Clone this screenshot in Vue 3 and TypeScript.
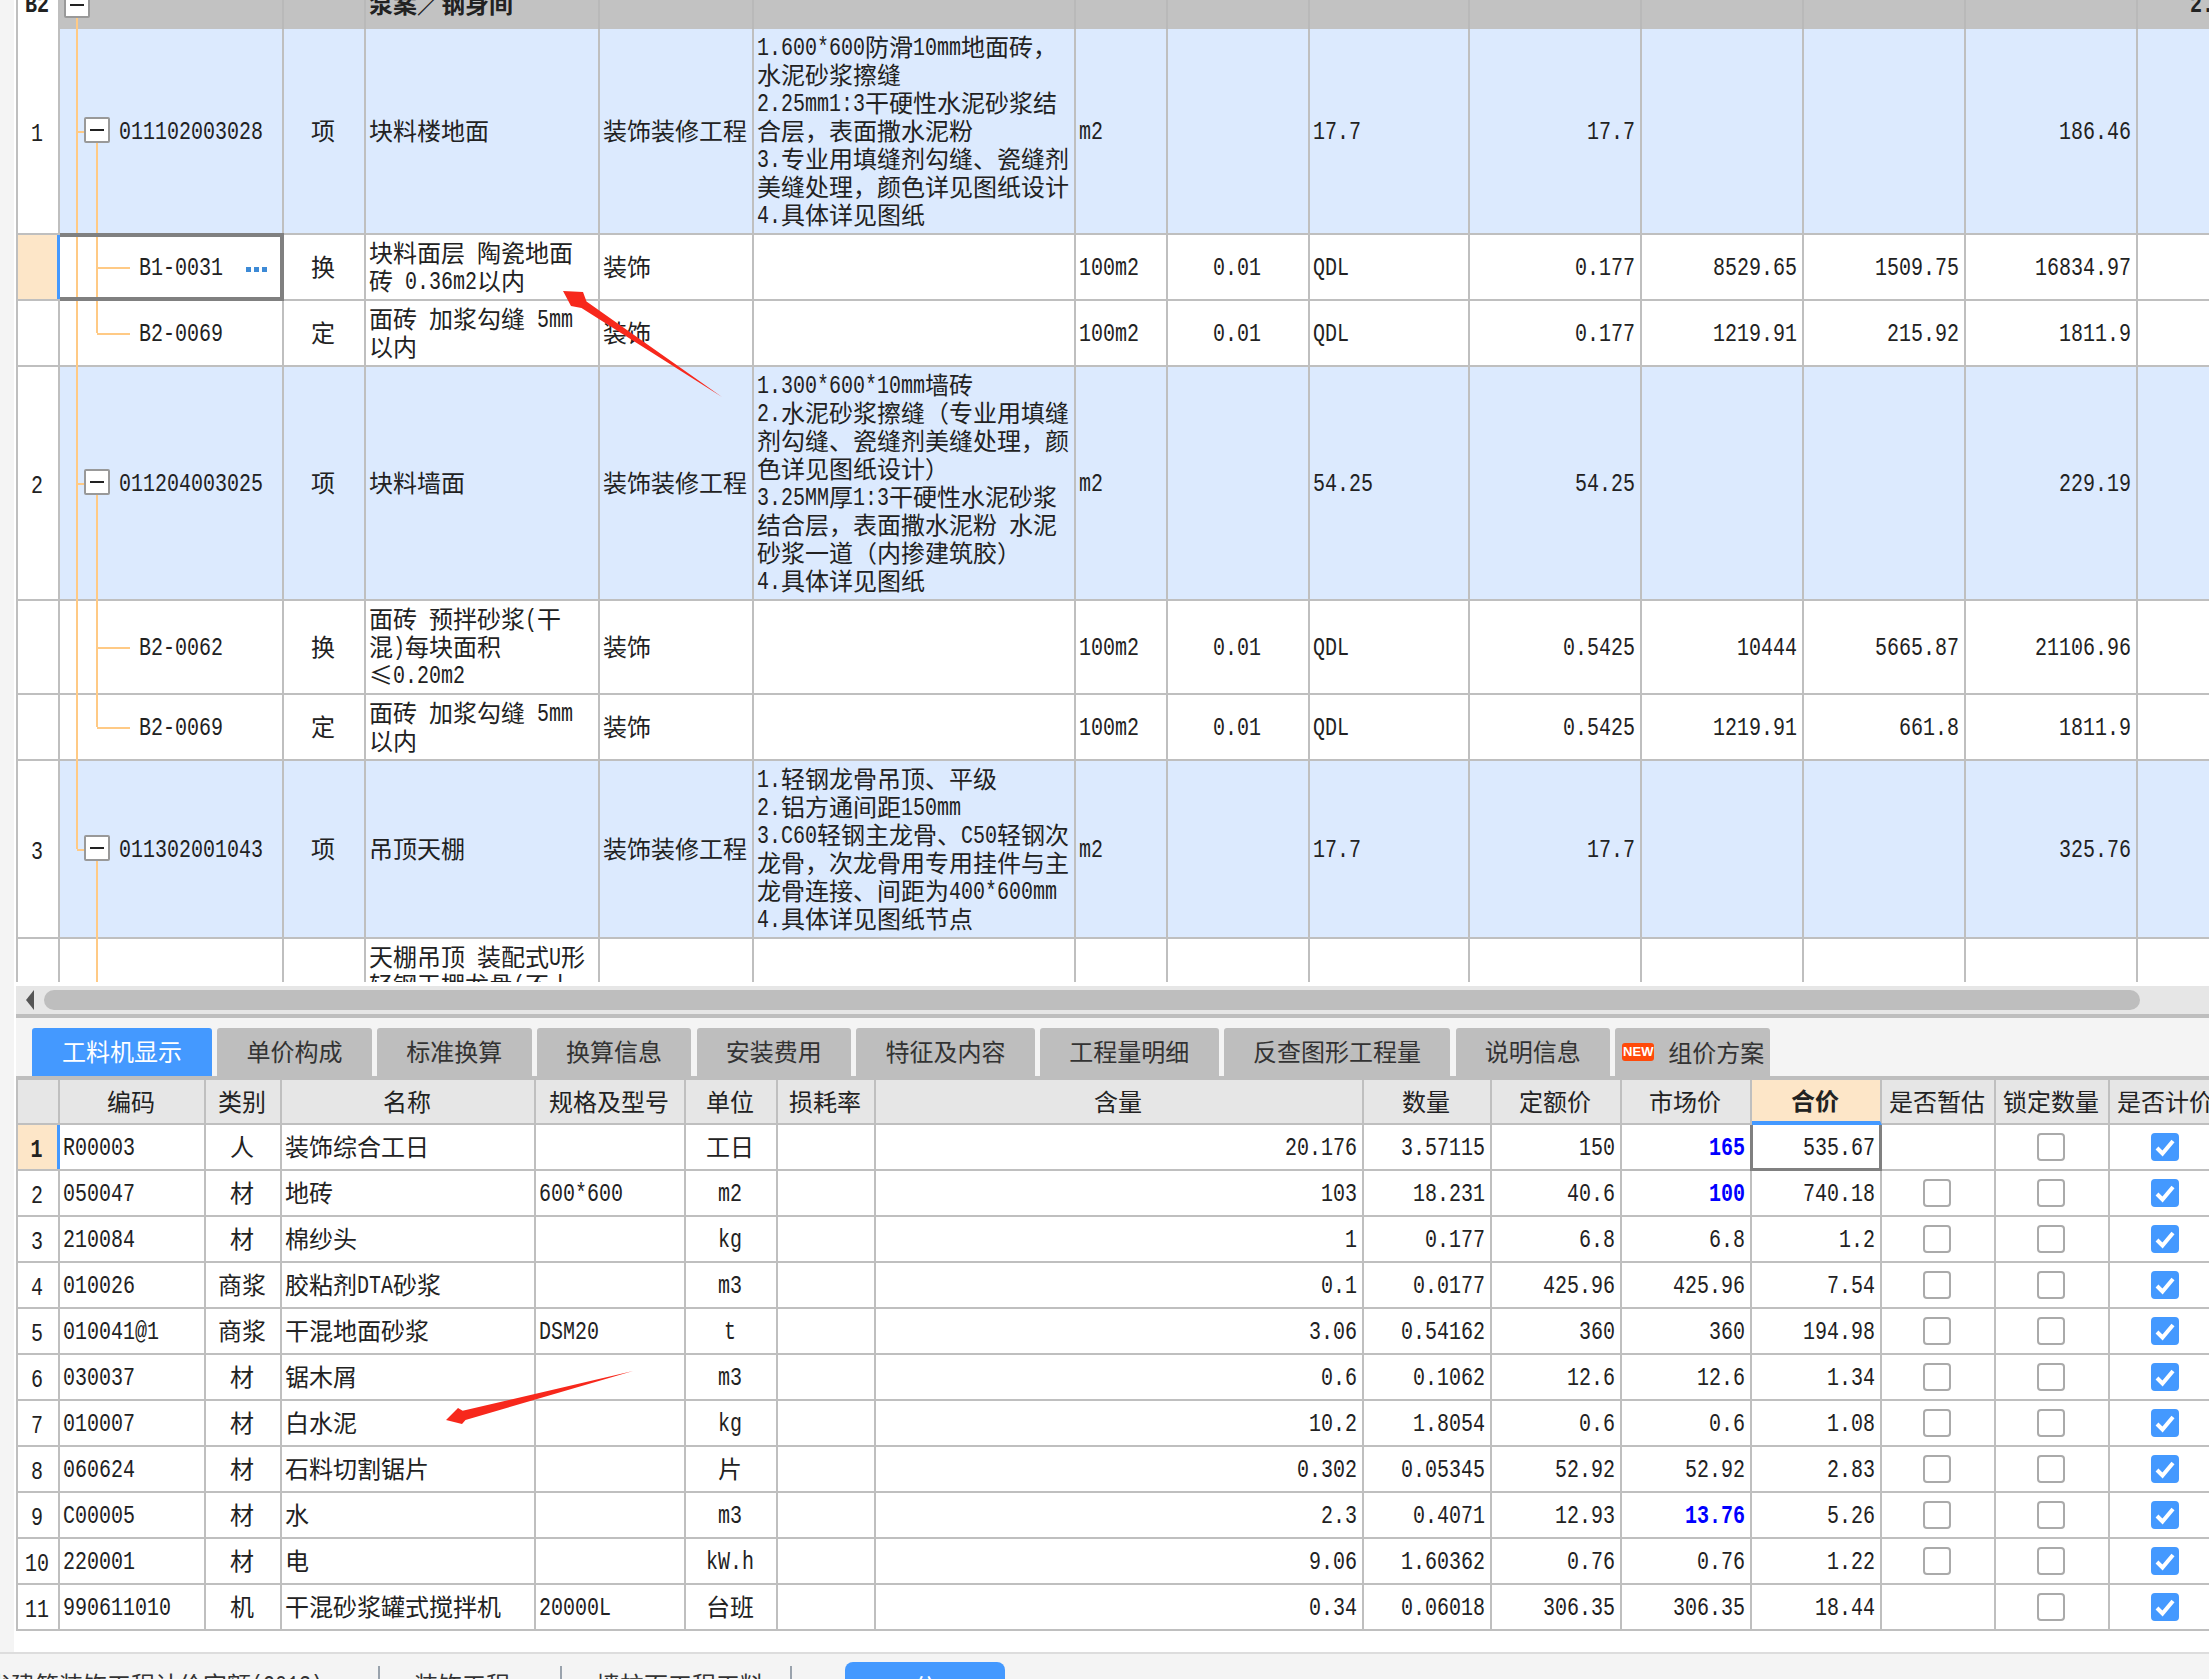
<script setup lang="ts">
import { h, type FunctionalComponent } from "vue";

// latin runs get their own narrow font so digits sit at half the width of a CJK glyph
const Tx: FunctionalComponent<{ t: string }> = ({ t }) =>
  (t.match(/[\x00-\x7f]+|[^\x00-\x7f]+/g) ?? []).map((s) =>
    s.charCodeAt(0) < 128 ? h("span", { class: "lat" }, s) : h("span", s)
  );
Tx.props = ["t"];

interface TopRow {
  idx: string;
  code: string;
  level: 1 | 2;
  flags?: string;
  cells: string[];
}

const topAlign = ["c", "l", "l", "l", "l", "c", "l", "r", "r", "r", "r", "l"];

const topRows: TopRow[] = [
  {
    idx: "1",
    code: "011102003028",
    level: 1,
    cells: [
      "项",
      "块料楼地面",
      "装饰装修工程",
      "1.600*600防滑10mm地面砖，\n水泥砂浆擦缝\n2.25mm1:3干硬性水泥砂浆结\n合层，表面撒水泥粉\n3.专业用填缝剂勾缝、瓷缝剂\n美缝处理，颜色详见图纸设计\n4.具体详见图纸",
      "m2",
      "",
      "17.7",
      "17.7",
      "",
      "",
      "186.46",
      "",
    ],
  },
  {
    idx: "",
    code: "B1-0031",
    level: 2,
    flags: "sel",
    cells: ["换", "块料面层 陶瓷地面\n砖 0.36m2以内", "装饰", "", "100m2", "0.01", "QDL", "0.177", "8529.65", "1509.75", "16834.97", ""],
  },
  {
    idx: "",
    code: "B2-0069",
    level: 2,
    flags: "last",
    cells: ["定", "面砖 加浆勾缝 5mm\n以内", "装饰", "", "100m2", "0.01", "QDL", "0.177", "1219.91", "215.92", "1811.9", ""],
  },
  {
    idx: "2",
    code: "011204003025",
    level: 1,
    cells: [
      "项",
      "块料墙面",
      "装饰装修工程",
      "1.300*600*10mm墙砖\n2.水泥砂浆擦缝（专业用填缝\n剂勾缝、瓷缝剂美缝处理，颜\n色详见图纸设计）\n3.25MM厚1:3干硬性水泥砂浆\n结合层，表面撒水泥粉 水泥\n砂浆一道（内掺建筑胶）\n4.具体详见图纸",
      "m2",
      "",
      "54.25",
      "54.25",
      "",
      "",
      "229.19",
      "",
    ],
  },
  {
    idx: "",
    code: "B2-0062",
    level: 2,
    cells: ["换", "面砖 预拌砂浆(干\n混)每块面积\n≤0.20m2", "装饰", "", "100m2", "0.01", "QDL", "0.5425", "10444", "5665.87", "21106.96", ""],
  },
  {
    idx: "",
    code: "B2-0069",
    level: 2,
    flags: "last",
    cells: ["定", "面砖 加浆勾缝 5mm\n以内", "装饰", "", "100m2", "0.01", "QDL", "0.5425", "1219.91", "661.8", "1811.9", ""],
  },
  {
    idx: "3",
    code: "011302001043",
    level: 1,
    flags: "end",
    cells: [
      "项",
      "吊顶天棚",
      "装饰装修工程",
      "1.轻钢龙骨吊顶、平级\n2.铝方通间距150mm\n3.C60轻钢主龙骨、C50轻钢次\n龙骨，次龙骨用专用挂件与主\n龙骨连接、间距为400*600mm\n4.具体详见图纸节点",
      "m2",
      "",
      "17.7",
      "17.7",
      "",
      "",
      "325.76",
      "",
    ],
  },
  {
    idx: "",
    code: "",
    level: 2,
    flags: "tail",
    cells: ["", "天棚吊顶 装配式U形\n轻钢天棚龙骨(不上\n人型)", "", "", "", "", "", "", "", "", "", ""],
  },
];

const tabs = ["工料机显示", "单价构成", "标准换算", "换算信息", "安装费用", "特征及内容", "工程量明细", "反查图形工程量", "说明信息"];

const heads = ["", "编码", "类别", "名称", "规格及型号", "单位", "损耗率", "含量", "数量", "定额价", "市场价", "合价", "是否暂估", "锁定数量", "是否计价"];
const botAlign = ["l", "c", "l", "l", "c", "l", "r", "r", "r", "r", "r"];

// code, type, name, spec, unit, loss, amount, qty, base price, market price, total
const items: { c: string[]; blue?: boolean; est: boolean }[] = [
  { c: ["R00003", "人", "装饰综合工日", "", "工日", "", "20.176", "3.57115", "150", "165", "535.67"], blue: true, est: false },
  { c: ["050047", "材", "地砖", "600*600", "m2", "", "103", "18.231", "40.6", "100", "740.18"], blue: true, est: true },
  { c: ["210084", "材", "棉纱头", "", "kg", "", "1", "0.177", "6.8", "6.8", "1.2"], est: true },
  { c: ["010026", "商浆", "胶粘剂DTA砂浆", "", "m3", "", "0.1", "0.0177", "425.96", "425.96", "7.54"], est: true },
  { c: ["010041@1", "商浆", "干混地面砂浆", "DSM20", "t", "", "3.06", "0.54162", "360", "360", "194.98"], est: true },
  { c: ["030037", "材", "锯木屑", "", "m3", "", "0.6", "0.1062", "12.6", "12.6", "1.34"], est: true },
  { c: ["010007", "材", "白水泥", "", "kg", "", "10.2", "1.8054", "0.6", "0.6", "1.08"], est: true },
  { c: ["060624", "材", "石料切割锯片", "", "片", "", "0.302", "0.05345", "52.92", "52.92", "2.83"], est: true },
  { c: ["C00005", "材", "水", "", "m3", "", "2.3", "0.4071", "12.93", "13.76", "5.26"], blue: true, est: true },
  { c: ["220001", "材", "电", "", "kW.h", "", "9.06", "1.60362", "0.76", "0.76", "1.22"], est: true },
  { c: ["990611010", "机", "干混砂浆罐式搅拌机", "20000L", "台班", "", "0.34", "0.06018", "306.35", "306.35", "18.44"], est: false },
];
</script>

<template>
  <div class="page">
    <div class="body">
      <div class="top">
        <div class="row t-cols band">
          <div class="cell c idx"><b class="line"><Tx t="B2" /></b></div>
          <div class="cell tree lv0"><i class="box band-box"></i></div>
          <div class="cell"></div>
          <div class="cell l"><b class="line">泵案／钢身间</b></div>
          <div class="cell" v-for="n in 9" :key="n"></div>
          <div class="cell band-end"><b class="line"><Tx t="2." /></b></div>
        </div>

        <div class="row t-cols" v-for="(r, i) in topRows" :key="i" :class="r.level === 1 ? 'parent' : 'child'">
          <div class="cell c idx" :class="{ cur: r.flags === 'sel' }">
            <div class="line"><Tx :t="r.idx" /></div>
          </div>
          <div class="cell tree" :class="[r.level === 1 ? 'lv1' : 'lv2', r.flags]">
            <template v-if="r.level === 1">
              <i class="stub"></i>
              <i class="box"></i>
            </template>
            <i v-else-if="r.code" class="hz"></i>
            <div class="line code"><Tx :t="r.code" /></div>
            <template v-if="r.flags === 'sel'">
              <i class="frame"></i>
              <svg class="more" width="22" height="5" viewBox="0 0 22 5">
                <rect x="0" y="0" width="5" height="5" fill="#3d8ad6" />
                <rect x="8" y="0" width="5" height="5" fill="#3d8ad6" />
                <rect x="16" y="0" width="5" height="5" fill="#3d8ad6" />
              </svg>
            </template>
          </div>
          <div class="cell" v-for="(v, j) in r.cells" :key="j" :class="topAlign[j]">
            <div class="line" v-for="(ln, k) in v.split('\n')" :key="k"><Tx :t="ln" /></div>
          </div>
        </div>
      </div>

      <div class="scroll">
        <svg class="arrow" width="8" height="20" viewBox="0 0 8 20"><path d="M8 0 L0 10 L8 20 Z" fill="#555" /></svg>
        <div class="thumb"></div>
      </div>

      <div class="tabs">
        <div class="tab" v-for="(t, i) in tabs" :key="t" :class="{ on: i === 0 }">{{ t }}</div>
        <div class="tab last-tab"><span class="new">NEW</span>组价方案</div>
      </div>

      <div class="bottom">
        <div class="row b-cols head">
          <div class="cell c" v-for="(t, i) in heads" :key="i" :class="{ hot: t === '合价' }">{{ t }}</div>
        </div>
        <div class="row b-cols item" v-for="(it, i) in items" :key="i">
          <div class="cell c idx" :class="{ cur: i === 0 }">
            <div class="line">
              <b v-if="i === 0"><Tx t="1" /></b>
              <Tx v-else :t="String(i + 1)" />
            </div>
          </div>
          <div class="cell" v-for="(v, j) in it.c" :key="j" :class="[botAlign[j], { strong: it.blue && j === 9, picked: i === 0 && j === 10 }]">
            <div class="line"><Tx :t="v" /></div>
          </div>
          <div class="cell c"><span v-if="it.est" class="chk"></span></div>
          <div class="cell c"><span class="chk"></span></div>
          <div class="cell c">
            <span class="chk on">
              <svg width="24" height="24" viewBox="0 0 24 24"><path d="M4 13 L9.5 18.5 L20 6" fill="none" stroke="#fff" stroke-width="4" /></svg>
            </span>
          </div>
        </div>
      </div>
    </div>

    <div class="footer">
      <div class="f-item first">省建筑装饰工程计价定额<Tx t="(2013)" /></div>
      <div class="f-item second">装饰工程</div>
      <div class="f-item third">墙柱面工程工料</div>
      <div class="f-btn">分</div>
    </div>

    <svg class="marks" width="2209" height="1679" viewBox="0 0 2209 1679">
      <polygon points="563,291 583,292 586.5,301.5 722,397 581.5,308 571,306" fill="#f7281c" />
      <polygon points="446,1420 458,1408 462.7,1410.8 633,1371 465.5,1420 462,1424" fill="#f7281c" />
    </svg>
  </div>
</template>

<style scoped>
.page {
  position: relative;
  width: 2209px;
  height: 1679px;
  overflow: hidden;
  display: flex;
  flex-direction: column;
  background: #fff;
  color: #222;
  font-family: "Noto Sans CJK SC", sans-serif;
  font-size: 24px;
  line-height: 28px;
}

.body {
  height: 1652px;
  flex: none;
  border-left: 14px solid #f4f4f4;
  padding-left: 2px;
  box-sizing: border-box;
}

.page :deep(.lat) {
  display: inline-block;
  font-family: "Liberation Mono", monospace;
  font-size: 20px;
  line-height: 28px;
  white-space: pre;
  transform: translateY(-1px) scaleY(1.28);
  transform-origin: 50% 69%;
}

.top {
  height: 982px;
  margin-bottom: 4px;
  overflow: hidden;
}

.row {
  display: grid;
  width: max-content;
  box-sizing: border-box;
  border-left: 2px solid #bfbfbf;
  border-bottom: 2px solid #bfbfbf;
}

.t-cols {
  grid-template-columns: 42px 224px 82px 234px 154px 322px 92px 142px 160px 172px 162px 162px 172px 100px;
}

.b-cols {
  grid-template-columns: 42px 146px 76px 254px 150px 92px 98px 488px 128px 130px 130px 130px 114px 114px 114px;
}

.cell {
  position: relative;
  box-sizing: border-box;
  border-right: 2px solid #bfbfbf;
  padding: 3px 2px 5px 3px;
  display: flex;
  flex-direction: column;
  justify-content: center;
  white-space: nowrap;
}

.cell.c {
  align-items: center;
  padding-left: 1px;
  padding-right: 3px;
}

.cell.l {
  align-items: flex-start;
}

.cell.r {
  align-items: flex-end;
  padding-right: 5px;
}

.line {
  display: block;
  height: 28px;
}

.idx .line {
  margin-top: 4px;
}

.band {
  height: 45px;
  margin-top: -16px;
  border-bottom: none;
}

.band .cell {
  background: #c2c2c2;
  border-right-color: #b9b9b9;
  padding-bottom: 11px;
}

.band .idx {
  background: #fff;
  border-right-color: #bfbfbf;
}

.band .idx .line {
  margin-top: 0;
}

.band-end {
  padding-left: 52px;
}

.parent .cell {
  background: #dceafe;
}

.parent .idx {
  background: #fff;
}

.idx.cur {
  background: #fde6c8;
  border-right: 3px solid #4499ff;
}

/* tree connectors */
.tree {
  padding-left: 59px;
}

.tree::before {
  content: "";
  position: absolute;
  left: 16px;
  top: 0;
  bottom: -2px;
  width: 2px;
  background: #ffca85;
}

.tree::after {
  content: "";
  position: absolute;
  left: 36px;
  top: 0;
  bottom: -2px;
  width: 2px;
  background: #ffca85;
}

.lv0::after {
  display: none;
}

.lv0::before {
  top: 50%;
}

.lv1::after {
  top: 50%;
}

.end::before {
  bottom: 50%;
}

.tail::before {
  display: none;
}

.last::after {
  bottom: 50%;
}

.lv2 {
  padding-left: 79px;
}

.stub {
  position: absolute;
  left: 17px;
  top: 50%;
  width: 8px;
  height: 2px;
  background: #ffca85;
}

.hz {
  position: absolute;
  left: 37px;
  top: 50%;
  width: 33px;
  height: 2px;
  background: #ffca85;
}

.box {
  position: absolute;
  z-index: 1;
  left: 24px;
  top: 50%;
  width: 26px;
  height: 26px;
  margin-top: -14px;
  box-sizing: border-box;
  background: #fff;
  border: 2px solid #999;
  border-radius: 2px;
}

.box::before {
  content: "";
  position: absolute;
  left: 4px;
  right: 4px;
  top: 10px;
  height: 2px;
  background: #222;
}

.band-box {
  left: 4px;
  margin-top: -15px;
}

.frame {
  position: absolute;
  z-index: 2;
  left: 0;
  top: -2px;
  right: -2px;
  bottom: -2px;
  border: 4px solid #808080;
  border-left: none;
}

.more {
  position: absolute;
  z-index: 2;
  left: 186px;
  top: 50%;
}

/* scrollbar and tabs */
.scroll {
  height: 28px;
  background: #e6e6e6;
  border-bottom: 4px solid #bebebe;
  position: relative;
  display: flex;
  align-items: center;
  padding-left: 10px;
}

.arrow {
  flex: none;
  margin-right: 10px;
}

.thumb {
  width: 2096px;
  height: 20px;
  flex: none;
  background: #bebebe;
  border-radius: 10px;
}

.tabs {
  display: flex;
  gap: 5.25px;
  height: 48px;
  padding: 10px 0 0 16px;
  background: #f4f4f4;
  border-bottom: 4px solid #bebebe;
}

.tab {
  flex: none;
  padding: 0 29.25px;
  line-height: 46px;
  background: #bebebe;
  border-radius: 3px 3px 0 0;
  color: #333;
}

.tab.on {
  background: #4499ff;
  color: #fff;
  padding: 0 30px;
}

.last-tab {
  display: flex;
  align-items: center;
  padding: 0 6px 0 7px;
}

.new {
  width: 32px;
  height: 18px;
  margin-right: 14px;
  border-radius: 3px;
  background: #ff4a0a;
  color: #fff;
  font: bold 13px/18px "Liberation Sans", sans-serif;
  text-align: center;
}

/* lower grid */
.head {
  height: 45px;
}

.head .cell {
  background: #e6e6e6;
  padding: 0 2px 2px 0;
}

.head .hot {
  background: #fde6c8;
  font-weight: 700;
  border-bottom: 4px solid #4499ff;
  margin-bottom: -2px;
}

.item {
  height: 46px;
}

.item .cell {
  padding-top: 0;
  padding-bottom: 0;
}

.item .line {
  margin-top: -2px;
}

.item .idx .line {
  margin-top: 2px;
}

.strong {
  color: #0000ff;
}

.page .strong :deep(.lat) {
  font-weight: 700;
}

.picked::after {
  content: "";
  position: absolute;
  left: -2px;
  top: 0;
  right: -2px;
  bottom: -2px;
  border: 3px solid #808080;
  border-top: none;
}

.chk {
  display: block;
  width: 28px;
  height: 28px;
  box-sizing: border-box;
  border: 2px solid #aaa;
  border-radius: 4px;
  background: #fff;
}

.chk.on {
  background: #4499ff;
  border-color: #4499ff;
  display: flex;
  align-items: center;
  justify-content: center;
}

/* footer */
.footer {
  flex: none;
  height: 27px;
  box-sizing: border-box;
  border-top: 2px solid #ddd;
  background: #f4f4f4;
  display: flex;
  align-items: flex-start;
  overflow: hidden;
  white-space: nowrap;
}

.f-item {
  margin-top: 12px;
  padding-top: 4px;
  height: 40px;
  flex: none;
  color: #333;
  border-right: 2px solid #9aa3ad;
  box-sizing: border-box;
}

.first {
  width: 394px;
  margin-left: -14px;
  padding-left: 1px;
}

.second {
  width: 182px;
  padding-left: 34px;
}

.third {
  width: 230px;
  padding-left: 34px;
}

.f-btn {
  flex: none;
  width: 160px;
  height: 40px;
  margin: 8px 0 0 53px;
  padding-top: 10px;
  box-sizing: border-box;
  background: #4499ff;
  border-radius: 8px 8px 0 0;
  color: #fff;
  text-align: center;
}

.marks {
  position: absolute;
  left: 0;
  top: 0;
  z-index: 5;
  pointer-events: none;
}
</style>

<style>
body {
  margin: 0;
  overflow: hidden;
}
</style>
